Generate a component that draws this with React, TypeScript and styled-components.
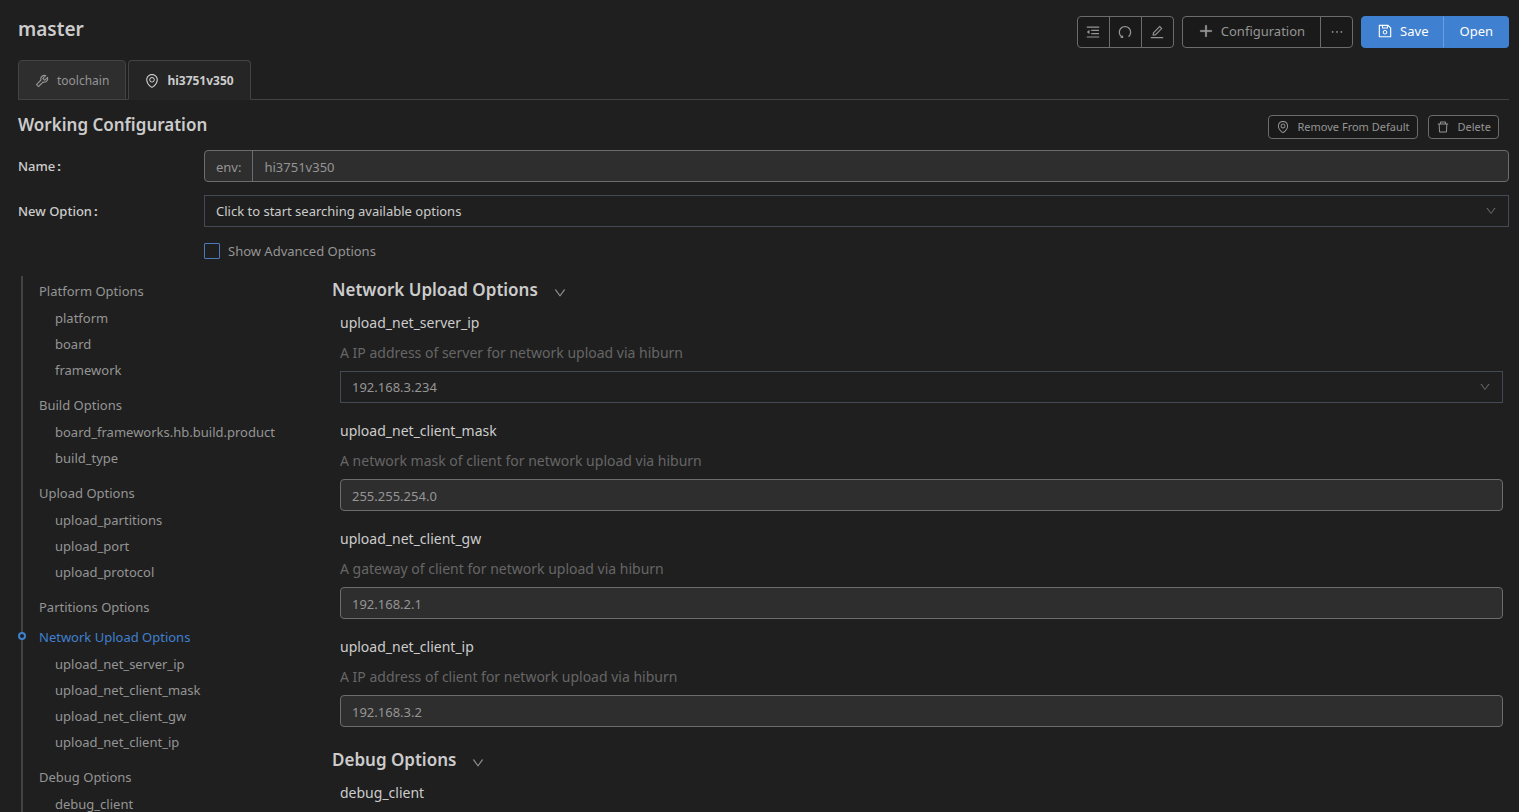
import React from 'react';
import styled, { createGlobalStyle, css } from 'styled-components';
import {
  AiOutlineDelete,
  AiOutlineDown,
  AiOutlineEdit,
  AiOutlineEllipsis,
  AiOutlineEnvironment,
  AiOutlineMenuFold,
  AiOutlinePlus,
  AiOutlineSave,
  AiOutlineTool,
  AiOutlineUndo,
} from 'react-icons/ai';

const color = {
  page: '#1f1f1f',
  control: '#1a1a1a',
  field: '#2e2e2e',
  tabActive: '#252525',
  line: '#434343',
  border: '#6c6c6c',
  selectBorder: '#434a54',
  text: '#959595',
  strong: '#cccccc',
  faint: '#666666',
  primary: '#3f80d0',
};

const GlobalStyle = createGlobalStyle`
  *, *::before, *::after { box-sizing: border-box; }
  body {
    margin: 0;
    background: ${color.page};
    color: ${color.text};
    font-family: "Noto Sans", "Open Sans", sans-serif;
    font-size: 13px;
    line-height: 22px;
  }
  button, input, select { font: inherit; color: inherit; margin: 0; }
  svg { display: block; flex: none; }
`;

const Page = styled.div`
  height: 100vh;
  display: flex;
  flex-direction: column;
  padding: 0 10px 0 18px;
  overflow: hidden;
`;

const Header = styled.header`
  display: flex;
  justify-content: space-between;
  height: 48px;
  padding-top: 16px;
  flex: none;
`;

const PageTitle = styled.h1`
  margin: 0;
  color: ${color.strong};
  font-size: 19px;
  font-weight: 600;
  line-height: 26px;
`;

const Actions = styled.div`
  display: flex;
  gap: 8px;
`;

const Group = styled.div`
  display: flex;

  > button + button { margin-left: -1px; }
  > button:not(:first-child) { border-top-left-radius: 0; border-bottom-left-radius: 0; }
  > button:not(:last-child) { border-top-right-radius: 0; border-bottom-right-radius: 0; }
`;

const Button = styled.button<{ $primary?: boolean; $icon?: boolean; $small?: boolean; $divided?: boolean }>`
  display: flex;
  align-items: center;
  justify-content: center;
  gap: 7px;
  height: 32px;
  padding: 0 15px 2px;
  border: 1px solid ${color.border};
  border-radius: 4px;
  background: ${color.control};
  cursor: pointer;

  ${p => p.$icon && css`
    width: 33px;
    padding: 0;
  `}
  ${p => p.$small && css`
    gap: 8px;
    height: 24px;
    padding: 0 7px;
    font-size: 11px;
  `}
  ${p => p.$primary && css`
    border-color: ${color.primary};
    background: ${color.primary};
    color: #ffffff;
  `}
  ${p => p.$divided && css`
    border-left-color: #67a0dc;
  `}
`;

const Tabs = styled.div`
  display: flex;
  flex: none;
  gap: 2px;
  margin-top: 12px;
  border-bottom: 1px solid ${color.line};
`;

const Tab = styled.button<{ $active?: boolean }>`
  display: flex;
  align-items: center;
  gap: 7px;
  height: 40px;
  margin-bottom: -1px;
  padding: 1px 16px 0 15px;
  border: 1px solid ${color.line};
  border-radius: 4px 4px 0 0;
  background: ${color.field};
  font-size: 12px;
  cursor: pointer;

  ${p => p.$active && css`
    border-bottom-color: ${color.tabActive};
    background: ${color.tabActive};
    color: ${color.strong};
    font-weight: 700;
  `}
`;

const Toolbar = styled.div`
  display: flex;
  flex: none;
  justify-content: space-between;
  align-items: center;
  height: 50px;
  padding-right: 10px;
`;

const Heading = styled.h2`
  margin: 0;
  color: ${color.strong};
  font-size: 17px;
  font-weight: 600;
  line-height: 28px;
`;

const SmallActions = styled.div`
  display: flex;
  gap: 10px;
  padding-top: 4px;
`;

const FormRow = styled.div`
  display: grid;
  flex: none;
  grid-template-columns: 186px 1fr;
  align-items: center;
  margin-bottom: 13px;
`;

const Label = styled.label`
  display: flex;
  gap: 2px;
  color: ${color.strong};
  font-weight: 500;
`;

const Colon = styled.span`
  font-weight: 700;
`;

const InputGroup = styled.div`
  display: flex;
  height: 32px;
  border: 1px solid ${color.border};
  border-radius: 4px;
  background: ${color.field};
  overflow: hidden;
`;

const Addon = styled.span`
  display: flex;
  align-items: center;
  padding: 2px 11px 0;
  border-right: 1px solid ${color.border};
`;

const BareInput = styled.input`
  flex: 1;
  min-width: 0;
  padding: 2px 11px 0;
  border: 0;
  background: transparent;
  outline: none;
`;

const TextInput = styled.input`
  display: block;
  width: 100%;
  height: 32px;
  padding: 2px 11px 0;
  border: 1px solid ${color.border};
  border-radius: 4px;
  background: ${color.field};
  outline: none;
`;

const SelectBox = styled.div`
  position: relative;

  > svg {
    position: absolute;
    top: 10px;
    right: 12px;
    color: ${color.faint};
    pointer-events: none;
  }
`;

const Select = styled.select<{ $bright?: boolean }>`
  appearance: none;
  display: block;
  width: 100%;
  height: 32px;
  padding: 0 32px 0 11px;
  border: 1px solid ${color.selectBorder};
  border-radius: 0;
  background: ${color.page};
  color: ${p => (p.$bright ? color.strong : color.text)};
  outline: none;
`;

const CheckRow = styled.label`
  display: flex;
  flex: none;
  align-items: center;
  gap: 8px;
  height: 22px;
  margin-left: 186px;
`;

const Checkbox = styled.input`
  appearance: none;
  width: 16px;
  height: 16px;
  border: 1px solid #4a7ab8;
  border-radius: 1px;
  background: transparent;
`;

const Workspace = styled.div`
  display: grid;
  flex: 1;
  grid-template-columns: 311px 1fr;
  min-height: 0;
  margin-top: 14px;
  padding: 0 6px 0 3px;
  overflow-y: auto;
  scrollbar-width: none;
`;

const Nav = styled.nav`
  border-left: 2px solid ${color.line};
`;

const NavSection = styled.div`
  padding: 6px 0 6px 16px;
  line-height: 18px;
`;

const NavTitle = styled.a<{ $active?: boolean }>`
  display: block;
  position: relative;
  color: ${p => (p.$active ? color.primary : 'inherit')};
  text-decoration: none;

  ${p => p.$active && css`
    &::before {
      content: '';
      position: absolute;
      top: 4px;
      left: -21px;
      width: 8px;
      height: 8px;
      border: 2px solid ${color.primary};
      border-radius: 50%;
      background: ${color.page};
    }
  `}
`;

const NavList = styled.ul`
  display: grid;
  gap: 8px;
  margin: 0;
  padding: 9px 0 5px 16px;
  list-style: none;
`;

const NavLink = styled.a`
  display: block;
  color: inherit;
  text-decoration: none;
`;

const Main = styled.main`
  min-width: 0;
`;

const Section = styled.section`
  & + & { margin-top: 2px; }
`;

const SectionTitle = styled.div`
  display: flex;
  align-items: center;
  gap: 15px;
  margin-bottom: 8px;
`;

const Toggle = styled.button`
  padding: 5px 0 0;
  border: 0;
  background: none;
  cursor: pointer;
`;

const Field = styled.div`
  padding: 0 0 17px 8px;
`;

const FieldName = styled.label`
  display: block;
  color: ${color.strong};
  font-size: 14px;
`;

const Description = styled.p`
  margin: 8px 0 7px;
  color: ${color.faint};
  font-size: 14px;
`;

const navigation = [
  { title: 'Platform Options', items: ['platform', 'board', 'framework'] },
  { title: 'Build Options', items: ['board_frameworks.hb.build.product', 'build_type'] },
  { title: 'Upload Options', items: ['upload_partitions', 'upload_port', 'upload_protocol'] },
  { title: 'Partitions Options', items: [] },
  {
    title: 'Network Upload Options',
    items: ['upload_net_server_ip', 'upload_net_client_mask', 'upload_net_client_gw', 'upload_net_client_ip'],
  },
  { title: 'Debug Options', items: ['debug_client'] },
];

type Option = { name: string; description?: string; value?: string; select?: boolean };

const sections: { title: string; options: Option[] }[] = [
  {
    title: 'Network Upload Options',
    options: [
      {
        name: 'upload_net_server_ip',
        description: 'A IP address of server for network upload via hiburn',
        value: '192.168.3.234',
        select: true,
      },
      {
        name: 'upload_net_client_mask',
        description: 'A network mask of client for network upload via hiburn',
        value: '255.255.254.0',
      },
      {
        name: 'upload_net_client_gw',
        description: 'A gateway of client for network upload via hiburn',
        value: '192.168.2.1',
      },
      {
        name: 'upload_net_client_ip',
        description: 'A IP address of client for network upload via hiburn',
        value: '192.168.3.2',
      },
    ],
  },
  { title: 'Debug Options', options: [{ name: 'debug_client' }] },
];

function OptionField({ option }: { option: Option }) {
  return (
    <Field>
      <FieldName htmlFor={option.value ? option.name : undefined}>{option.name}</FieldName>
      {option.description && <Description>{option.description}</Description>}
      {option.value && option.select && (
        <SelectBox>
          <Select id={option.name}>
            <option>{option.value}</option>
          </Select>
          <AiOutlineDown size={12} />
        </SelectBox>
      )}
      {option.value && !option.select && <TextInput id={option.name} defaultValue={option.value} />}
    </Field>
  );
}

export default function App() {
  return (
    <>
      <GlobalStyle />
      <Page>
        <Header>
          <PageTitle>master</PageTitle>
          <Actions>
            <Group>
              <Button $icon aria-label="Collapse"><AiOutlineMenuFold size={16} /></Button>
              <Button $icon aria-label="Revert"><AiOutlineUndo size={16} /></Button>
              <Button $icon aria-label="Edit"><AiOutlineEdit size={16} /></Button>
            </Group>
            <Group>
              <Button><AiOutlinePlus size={16} stroke="currentColor" strokeWidth={50} />Configuration</Button>
              <Button $icon aria-label="More"><AiOutlineEllipsis size={16} /></Button>
            </Group>
            <Group>
              <Button $primary><AiOutlineSave size={16} />Save</Button>
              <Button $primary $divided>Open</Button>
            </Group>
          </Actions>
        </Header>

        <Tabs role="tablist">
          <Tab role="tab" aria-selected={false}><AiOutlineTool size={16} />toolchain</Tab>
          <Tab role="tab" aria-selected $active><AiOutlineEnvironment size={16} />hi3751v350</Tab>
        </Tabs>

        <Toolbar>
          <Heading>Working Configuration</Heading>
          <SmallActions>
            <Button $small><AiOutlineEnvironment size={14} />Remove From Default</Button>
            <Button $small><AiOutlineDelete size={14} />Delete</Button>
          </SmallActions>
        </Toolbar>

        <FormRow>
          <Label htmlFor="name">Name<Colon>:</Colon></Label>
          <InputGroup>
            <Addon>env:</Addon>
            <BareInput id="name" defaultValue="hi3751v350" />
          </InputGroup>
        </FormRow>
        <FormRow>
          <Label htmlFor="new-option">New Option<Colon>:</Colon></Label>
          <SelectBox>
            <Select id="new-option" $bright>
              <option>Click to start searching available options</option>
            </Select>
            <AiOutlineDown size={12} />
          </SelectBox>
        </FormRow>
        <CheckRow>
          <Checkbox type="checkbox" />
          Show Advanced Options
        </CheckRow>

        <Workspace>
          <Nav>
            {navigation.map(({ title, items }) => (
              <NavSection key={title}>
                <NavTitle href="#" $active={title === 'Network Upload Options'}>{title}</NavTitle>
                {items.length > 0 && (
                  <NavList>
                    {items.map(item => (
                      <li key={item}><NavLink href="#">{item}</NavLink></li>
                    ))}
                  </NavList>
                )}
              </NavSection>
            ))}
          </Nav>
          <Main>
            {sections.map(({ title, options }) => (
              <Section key={title}>
                <SectionTitle>
                  <Heading>{title}</Heading>
                  <Toggle aria-label={`Toggle ${title}`}><AiOutlineDown size={14} /></Toggle>
                </SectionTitle>
                {options.map(option => <OptionField key={option.name} option={option} />)}
              </Section>
            ))}
          </Main>
        </Workspace>
      </Page>
    </>
  );
}
